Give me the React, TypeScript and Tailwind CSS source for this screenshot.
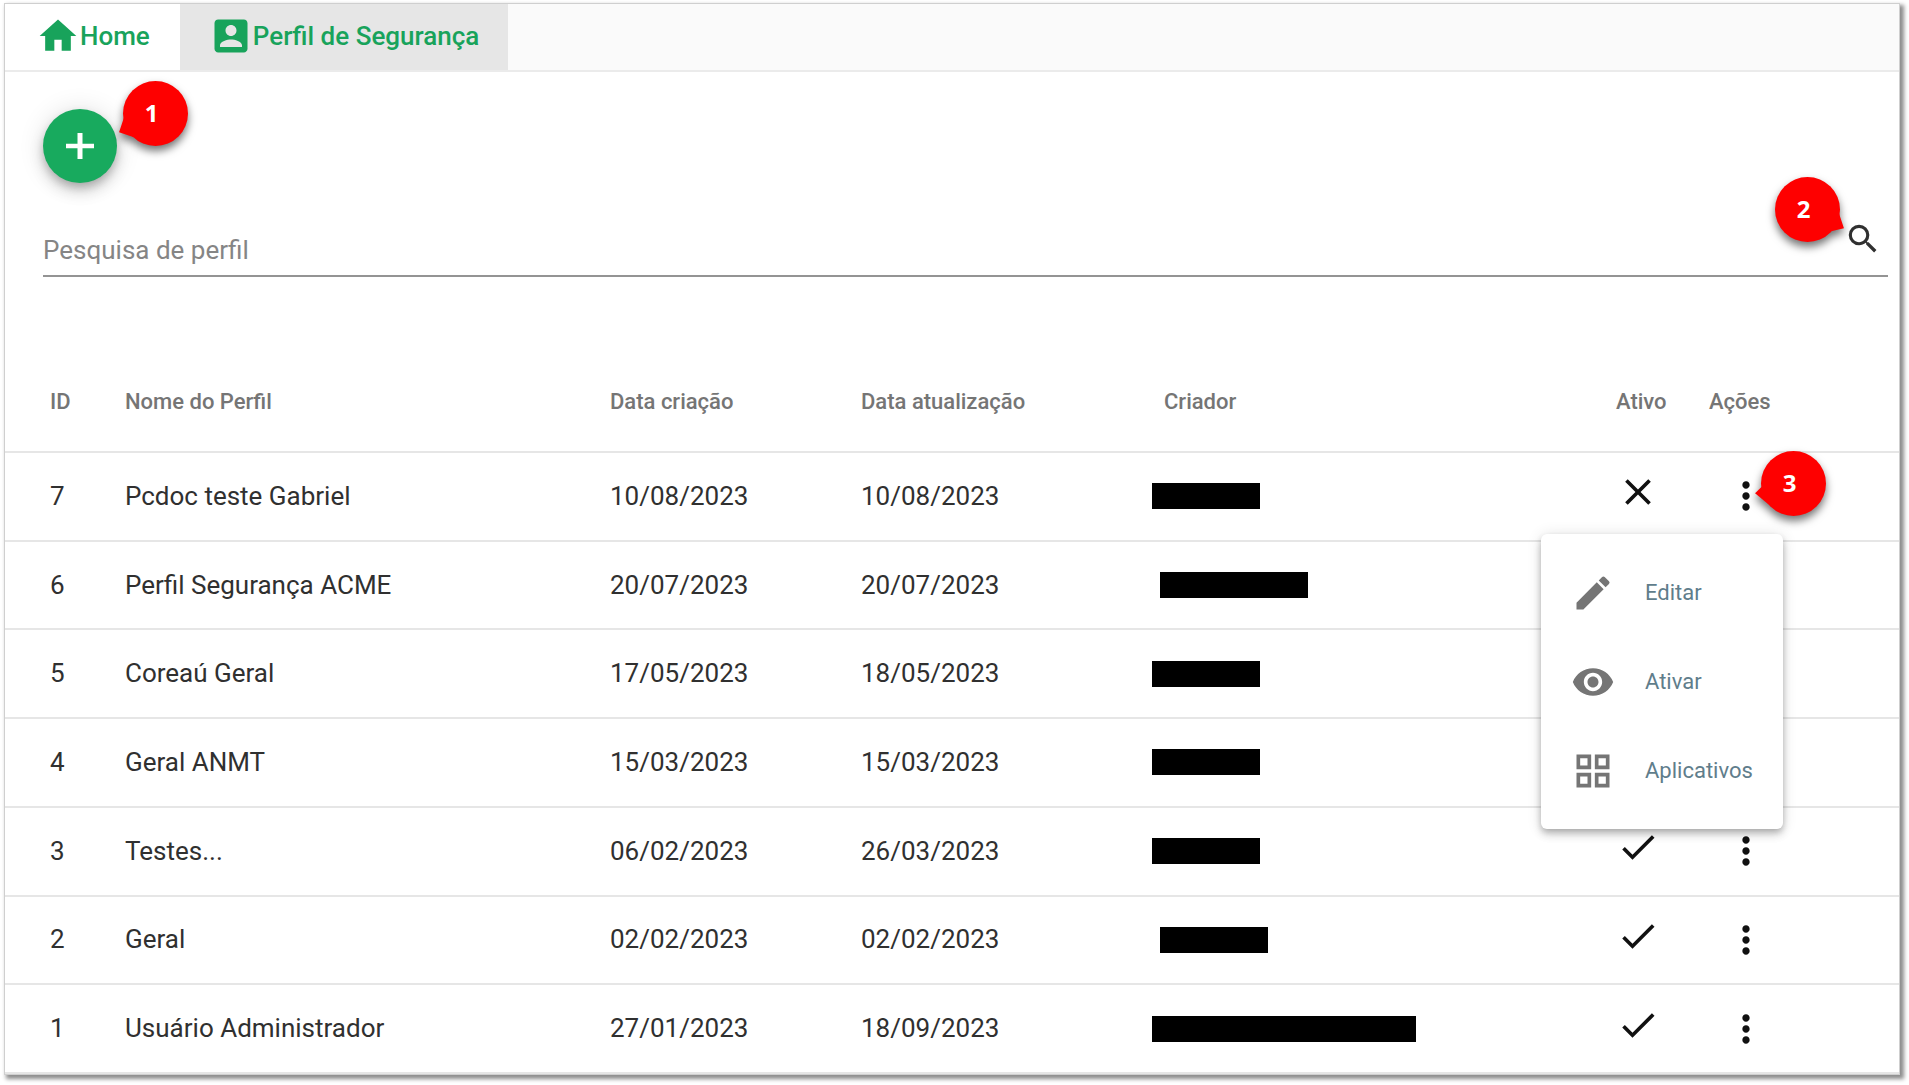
import { ReactNode } from 'react';
import { MdCheck, MdClose, MdEdit, MdGridView, MdHome, MdMoreVert, MdSearch, MdVisibility } from 'react-icons/md';

type Profile = {
  id: number;
  name: string;
  createdAt: string;
  updatedAt: string;
  active: boolean;
  creatorClass: string;
};

const profiles: Profile[] = [
  { id: 7, name: 'Pcdoc teste Gabriel', createdAt: '10/08/2023', updatedAt: '10/08/2023', active: false, creatorClass: 'w-[108px]' },
  { id: 6, name: 'Perfil Segurança ACME', createdAt: '20/07/2023', updatedAt: '20/07/2023', active: true, creatorClass: 'ml-2 w-[148px]' },
  { id: 5, name: 'Coreaú Geral', createdAt: '17/05/2023', updatedAt: '18/05/2023', active: true, creatorClass: 'w-[108px]' },
  { id: 4, name: 'Geral ANMT', createdAt: '15/03/2023', updatedAt: '15/03/2023', active: true, creatorClass: 'w-[108px]' },
  { id: 3, name: 'Testes...', createdAt: '06/02/2023', updatedAt: '26/03/2023', active: true, creatorClass: 'w-[108px]' },
  { id: 2, name: 'Geral', createdAt: '02/02/2023', updatedAt: '02/02/2023', active: true, creatorClass: 'ml-2 w-[108px]' },
  { id: 1, name: 'Usuário Administrador', createdAt: '27/01/2023', updatedAt: '18/09/2023', active: true, creatorClass: 'w-[264px]' },
];

const AccountBoxIcon = () => (
  <svg viewBox="0 0 24 24" fill="currentColor" className="size-11" aria-hidden="true">
    <path d="M3 5v14c0 1.1.89 2 2 2h14c1.1 0 2-.9 2-2V5c0-1.1-.9-2-2-2H5c-1.11 0-2 .9-2 2zm12 4c0 1.66-1.34 3-3 3s-3-1.34-3-3 1.34-3 3-3 3 1.34 3 3zm-9 8c0-2 4-3.1 6-3.1s6 1.1 6 3.1v1H6v-1z" />
  </svg>
);

const PlusIcon = () => (
  <svg viewBox="0 0 28 28" fill="none" stroke="currentColor" className="size-7" aria-hidden="true">
    <path d="M0 14h28" strokeWidth="4.5" />
    <path d="M14 1v26" strokeWidth="5" />
  </svg>
);

const Callout = ({ label, tail, className }: { label: string; tail: string; className: string }) => (
  <div className={`absolute z-20 size-[65px] ${className}`}>
    <svg
      viewBox="-33 -33 66 66"
      className="absolute inset-0 size-full overflow-visible fill-[#fe0000] drop-shadow-[0_5px_4px_rgba(0,0,0,0.55)]"
      aria-hidden="true"
    >
      <circle r="33" />
      <polygon points={tail} />
    </svg>
    <span className="relative flex size-full items-center justify-center pr-2 pb-0.5 font-['Open_Sans',sans-serif] text-2xl font-bold text-white">
      {label}
    </span>
  </div>
);

const MenuItem = ({ icon, children }: { icon: ReactNode; children: ReactNode }) => (
  <li>
    <button className="flex h-[89px] w-full items-center gap-[30px] px-[30px] text-[22px] text-[#607d8b]">
      <span className="text-[#757575]">{icon}</span>
      {children}
    </button>
  </li>
);

const ActionsMenu = () => (
  <ul className="absolute top-[81px] right-[116px] z-10 w-[242px] rounded-md bg-white py-[14px] shadow-[0_3px_6px_-1px_rgba(0,0,0,0.2),0_6px_8px_rgba(0,0,0,0.14),0_1px_15px_rgba(0,0,0,0.12)]">
    <MenuItem icon={<MdEdit className="size-11" />}>Editar</MenuItem>
    <MenuItem icon={<MdVisibility className="size-11" />}>Ativar</MenuItem>
    <MenuItem icon={<MdGridView className="size-11" />}>Aplicativos</MenuItem>
  </ul>
);

const ProfileRow = ({ profile, menuOpen }: { profile: Profile; menuOpen: boolean }) => (
  <tr className="border-b-2 border-[#e6e6e6]">
    <td className="pl-[45px]">{profile.id}</td>
    <td>{profile.name}</td>
    <td>{profile.createdAt}</td>
    <td>{profile.updatedAt}</td>
    <td>
      <div className={`h-[26px] bg-black ${profile.creatorClass}`} />
    </td>
    <td className="pb-2 text-[#111]">
      {profile.active ? <MdCheck className="size-11" /> : <MdClose className="size-11" />}
    </td>
    <td className="relative pl-[15px]">
      <button aria-label="Ações do perfil" className="block text-[#111]">
        <MdMoreVert className="size-11" />
      </button>
      {menuOpen && (
        <>
          <ActionsMenu />
          <Callout label="3" tail="-32,3 -39,10 -21,25" className="-top-0.5 left-[52px]" />
        </>
      )}
    </td>
  </tr>
);

export default function App() {
  return (
    <div className="min-h-screen bg-white pt-[3px] pr-[9px] pb-2 pl-1 font-[Roboto,sans-serif] text-[26px] text-[#303030]">
      <div className="border border-[#cfcfcf] bg-white shadow-[3px_3px_4px_1px_rgba(0,0,0,0.45)]">
        <nav className="flex border-b-2 border-[#ebebeb] bg-[#fafafa] font-medium text-[#18a35b]">
          <a href="#home" className="flex h-[66px] items-center bg-white pr-[30px] pb-0.5 pl-[31px]">
            <MdHome className="size-11" />
            Home
          </a>
          <a href="#perfil" className="flex h-[66px] items-center bg-[#e6e6e6] px-[29px] pb-0.5">
            <AccountBoxIcon />
            Perfil de Segurança
          </a>
        </nav>

        <div className="pt-[37px] pr-[11px] pl-[38px]">
          <div className="relative">
            <button
              aria-label="Adicionar perfil"
              className="flex size-[74px] items-center justify-center rounded-full bg-[#18aa5e] text-white shadow-[0_5px_8px_-1px_rgba(0,0,0,0.2),0_9px_15px_rgba(0,0,0,0.14),0_1px_27px_rgba(0,0,0,0.12)]"
            >
              <PlusIcon />
            </button>
            <Callout label="1" tail="-32,4 -37,19 -22,24" className="-top-7 left-20" />
          </div>

          <div className="relative mt-[37px] flex border-b-2 border-[#949494]">
            <input
              aria-label="Pesquisa de perfil"
              placeholder="Pesquisa de perfil"
              className="h-[55px] min-w-0 flex-1 pt-1 outline-none placeholder:text-[#858585]"
            />
            <button aria-label="Pesquisar" className="mr-[6px] self-start text-[#303030]">
              <MdSearch className="size-[38px]" />
            </button>
            <Callout label="2" tail="32,4 37,19 24,22" className="-top-[43px] right-12" />
          </div>
        </div>

        <table className="mt-[75px] h-[722px] w-full table-fixed border-collapse text-left">
          <colgroup>
            <col className="w-[120px]" />
            <col className="w-[485px]" />
            <col className="w-[251px]" />
            <col className="w-[291px]" />
            <col />
            <col className="w-[93px]" />
            <col className="w-[190px]" />
          </colgroup>
          <thead>
            <tr className="h-[100px] border-b-2 border-[#e6e6e6] text-[22px] text-[#757575]">
              <th className="pl-[45px] font-medium">ID</th>
              <th className="font-medium">Nome do Perfil</th>
              <th className="font-medium">Data criação</th>
              <th className="font-medium">Data atualização</th>
              <th className="pl-3 font-medium">Criador</th>
              <th className="font-medium">Ativo</th>
              <th className="font-medium">Ações</th>
            </tr>
          </thead>
          <tbody>
            {profiles.map((profile) => (
              <ProfileRow key={profile.id} profile={profile} menuOpen={profile.id === 7} />
            ))}
          </tbody>
        </table>
      </div>
    </div>
  );
}
